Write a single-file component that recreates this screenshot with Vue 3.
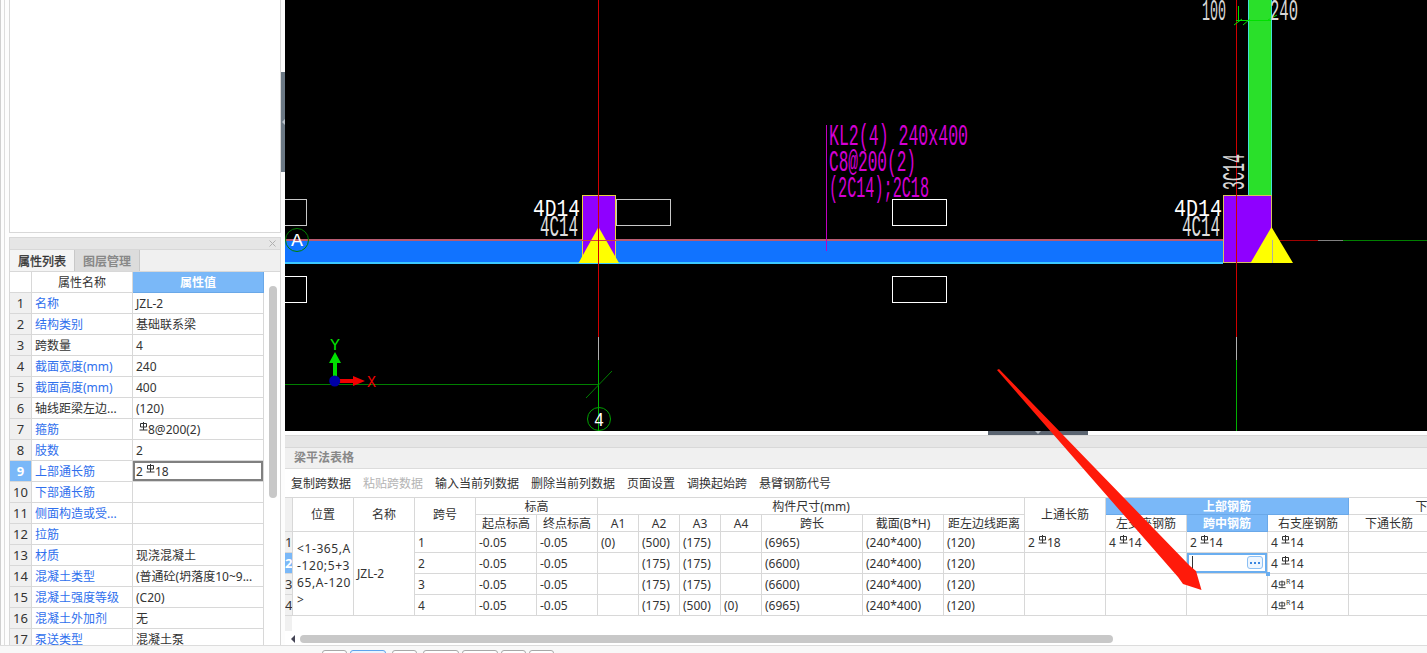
<template>
  <div class="app">
    <div class="main">
      <!-- left column -->
      <aside class="side">
        <div class="side-top"></div>
        <div class="side-handle"><i></i></div>
        <section class="prop">
          <div class="prop-head">
            <svg width="7" height="7" viewBox="0 0 7 7">
              <path d="M0.5 0.5L6.5 6.5M6.5 0.5L0.5 6.5" stroke="#b0b0b0" fill="none" />
            </svg>
          </div>
          <div class="tabs">
            <span class="tab on">属性列表</span>
            <span class="tab">图层管理</span>
          </div>
          <div class="prop-body">
            <table class="prop-table">
              <colgroup>
                <col style="width: 22px" />
                <col style="width: 101px" />
                <col style="width: 131px" />
              </colgroup>
              <thead>
                <tr>
                  <th></th>
                  <th>属性名称</th>
                  <th class="hl">属性值</th>
                </tr>
              </thead>
              <tbody>
                <tr v-for="(p, i) in props" :key="i">
                  <td class="no" :class="{ sel: i === 8 }">{{ i + 1 }}</td>
                  <td :class="{ link: p.link }">{{ p.name }}</td>
                  <td :class="{ editing: i === 8 }">
                    <template v-for="(s, j) in rebar(p.value)" :key="j">
                      <svg v-if="s.sym" class="sym" viewBox="0 0 9 9">
                        <path d="M1.5 1.5h6v3.5h-6zM4.5 0v8M0.5 8h8" fill="none" stroke="#333" />
                      </svg>
                      <span v-else>{{ s.text }}</span>
                    </template>
                  </td>
                </tr>
              </tbody>
            </table>
            <div class="prop-thumb"></div>
          </div>
        </section>
      </aside>

      <div class="right">
        <!-- CAD canvas, drawn in screen coordinates -->
        <svg class="cad" width="1142" height="431" viewBox="285 0 1142 431">
          <rect x="285" y="0" width="1142" height="431" fill="#000" />

          <g shape-rendering="crispEdges" fill="none" stroke="#fff">
            <rect x="616.5" y="199.5" width="54" height="26" stroke="#c8c8c8" />
            <rect x="892.5" y="199.5" width="54" height="26" />
            <rect x="892.5" y="276.5" width="54" height="26" />
            <rect x="280.5" y="199.5" width="26" height="26" stroke="#c8c8c8" />
            <rect x="280.5" y="276.5" width="26" height="26" />
          </g>

          <g shape-rendering="crispEdges">
            <rect x="1248" y="0" width="24" height="195" fill="#2ae02a" />
            <rect x="1248" y="0" width="1" height="195" fill="#40e0d8" />
            <rect x="1271" y="0" width="1" height="195" fill="#40e0d8" />
            <rect x="285" y="240" width="938" height="22" fill="#1173ff" />
            <rect x="285" y="239" width="938" height="2" fill="#b85a70" />
            <rect x="285" y="262" width="938" height="2" fill="#3cc8ff" />
            <rect x="1223" y="240" width="95" height="1" fill="#a00000" />
            <rect x="1318" y="240" width="25" height="1" fill="#808080" />
            <rect x="1343" y="240" width="84" height="1" fill="#007f00" />
            <rect x="582.5" y="195.5" width="33" height="67" fill="#8f00ff" stroke="#e8d040" />
            <rect x="1223.5" y="195.5" width="48" height="67" fill="#8f00ff" stroke="#d8c060" />
          </g>
          <polygon points="598.5,227 619,263 578.5,263" fill="#ff0" />
          <polygon points="1271.5,227 1293,263 1250.5,263" fill="#ff0" />

          <g shape-rendering="crispEdges">
            <rect x="582" y="240" width="34" height="1" fill="#d04040" />
            <rect x="1272" y="240" width="1" height="23" fill="#b0b0a0" />
            <rect x="598" y="0" width="1" height="337" fill="#d00000" />
            <rect x="598" y="337" width="1" height="23" fill="#b0b0b0" />
            <rect x="598" y="360" width="1" height="71" fill="#00b000" />
            <rect x="1236" y="0" width="1" height="337" fill="#d00000" />
            <rect x="1236" y="337" width="1" height="23" fill="#b0b0b0" />
            <rect x="1236" y="360" width="1" height="71" fill="#00b000" />
            <rect x="285" y="384" width="313" height="1" fill="#007f00" />
            <rect x="826" y="125" width="1" height="126" fill="#c000c0" />
          </g>
          <path d="M586 398L612 371" stroke="#007f00" fill="none" />

          <!-- axis markers -->
          <circle cx="297" cy="240" r="11.5" fill="none" stroke="#007f00" />
          <circle cx="599" cy="419" r="11.5" fill="none" stroke="#00a000" />
          <path
            d="M1238.5 6V22M1236 20.5H1271M1234 25L1242 19M1243 25L1250 19M1268 20L1277 15"
            stroke="#00e000"
            fill="none"
          />

          <text
            v-for="t in cadTexts"
            :key="t.text + t.x"
            class="cad-text"
            :x="t.x"
            :y="t.y"
            :font-size="t.size"
            :fill="t.color"
            :textLength="t.w"
            lengthAdjust="spacingAndGlyphs"
          >{{ t.text }}</text>
          <text
            class="cad-text"
            transform="translate(1244 190) rotate(-90)"
            font-size="31"
            fill="#d8d8d8"
            textLength="36"
            lengthAdjust="spacingAndGlyphs"
          >3C14</text>

          <!-- UCS icon -->
          <path d="M333 381V363H329L335 352L341 363H337V381Z" fill="#00e000" />
          <path d="M335 379H353V376L365 381L353 386V383H335Z" fill="#f00000" />
          <circle cx="334.7" cy="381" r="5.5" fill="#0000a8" />
        </svg>

        <div class="strip"><div class="strip-handle"><i></i></div></div>

        <section class="beam">
          <div class="band"></div>
          <div class="title">梁平法表格</div>
          <div class="toolbar">
            <span v-for="b in tools" :key="b" :class="{ off: b === '粘贴跨数据' }">{{ b }}</span>
          </div>

          <div class="grid-wrap">
            <table class="grid">
              <colgroup>
                <col v-for="(w, i) in colWidths" :key="i" :style="{ width: w + 'px' }" />
              </colgroup>
              <thead>
                <tr>
                  <th rowspan="2" class="no"></th>
                  <th rowspan="2">位置</th>
                  <th rowspan="2">名称</th>
                  <th rowspan="2">跨号</th>
                  <th colspan="2">标高</th>
                  <th colspan="7">构件尺寸(mm)</th>
                  <th rowspan="2">上通长筋</th>
                  <th colspan="3" class="hl">上部钢筋</th>
                  <th colspan="2">下部钢筋</th>
                </tr>
                <tr>
                  <th>起点标高</th>
                  <th>终点标高</th>
                  <th>A1</th>
                  <th>A2</th>
                  <th>A3</th>
                  <th>A4</th>
                  <th>跨长</th>
                  <th>截面(B*H)</th>
                  <th>距左边线距离</th>
                  <th>左支座钢筋</th>
                  <th class="hl">跨中钢筋</th>
                  <th>右支座钢筋</th>
                  <th>下通长筋</th>
                  <th></th>
                </tr>
              </thead>
              <tbody>
                <tr v-for="(r, i) in spans" :key="i">
                  <td class="no" :class="{ sel: i === 1 }">{{ i + 1 }}</td>
                  <td v-if="i === 0" rowspan="4" class="pos">
                    &lt;1-365,A<br />-120;5+3<br />65,A-120<br />&gt;
                  </td>
                  <td v-if="i === 0" rowspan="4">JZL-2</td>
                  <td>{{ i + 1 }}</td>
                  <td>-0.05</td>
                  <td>-0.05</td>
                  <td v-for="(c, k) in r.size" :key="k">{{ c }}</td>
                  <td v-for="(c, k) in r.bars" :key="'b' + k" :class="{ active: i === 1 && k === 2 }">
                    <template v-for="(s, j) in rebar(c)" :key="j">
                      <template v-if="s.sym">
                        <svg class="sym" :class="{ tight: s.r }" viewBox="0 0 9 9">
                          <path d="M1.5 1.5h6v3.5h-6zM4.5 0v8M0.5 8h8" fill="none" stroke="#333" />
                        </svg>
                        <sup v-if="s.r" class="r">R</sup>
                      </template>
                      <span v-else>{{ s.text }}</span>
                    </template>
                    <template v-if="i === 1 && k === 2">
                      <span class="caret"></span>
                      <span class="more"><b></b><b></b><b></b></span>
                      <span class="corner"></span>
                    </template>
                  </td>
                  <td></td>
                  <td></td>
                </tr>
              </tbody>
            </table>
            <div class="stub"></div>
          </div>

          <div class="hscroll">
            <i class="arrow"></i>
            <div class="hthumb"></div>
          </div>
        </section>
      </div>
    </div>

    <footer class="foot">
      <span
        v-for="(b, i) in footButtons"
        :key="i"
        class="foot-btn"
        :class="{ on: i === 1 }"
        :style="{ width: b.w + 'px', marginLeft: b.m + 'px' }"
      ></span>
    </footer>

    <!-- red annotation arrow laid over the screenshot -->
    <svg class="note" width="1427" height="653" viewBox="0 0 1427 653">
      <polygon
        points="997,370 999,369 1190,566 1196,571 1201.5,590 1183,584 1178,577"
        fill="#ff1a0a"
      />
    </svg>
  </div>
</template>

<script setup>
const props = [
  { name: "名称", value: "JZL-2", link: true },
  { name: "结构类别", value: "基础联系梁", link: true },
  { name: "跨数量", value: "4" },
  { name: "截面宽度(mm)", value: "240", link: true },
  { name: "截面高度(mm)", value: "400", link: true },
  { name: "轴线距梁左边...", value: "(120)" },
  { name: "箍筋", value: "#8@200(2)", link: true },
  { name: "肢数", value: "2", link: true },
  { name: "上部通长筋", value: "2#18", link: true },
  { name: "下部通长筋", value: "", link: true },
  { name: "侧面构造或受...", value: "", link: true },
  { name: "拉筋", value: "", link: true },
  { name: "材质", value: "现浇混凝土", link: true },
  { name: "混凝土类型", value: "(普通砼(坍落度10~9...", link: true },
  { name: "混凝土强度等级", value: "(C20)", link: true },
  { name: "混凝土外加剂", value: "无", link: true },
  { name: "泵送类型", value: "混凝土泵", link: true },
];

const tools = [
  "复制跨数据",
  "粘贴跨数据",
  "输入当前列数据",
  "删除当前列数据",
  "页面设置",
  "调换起始跨",
  "悬臂钢筋代号",
];

const colWidths = [8, 61, 61, 61, 61, 61, 41, 41, 41, 41, 101, 81, 81, 81, 81, 81, 81, 81, 101];

const spans = [
  {
    size: ["(0)", "(500)", "(175)", "", "(6965)", "(240*400)", "(120)"],
    bars: ["2#18", "4#14", "2#14", "4#14"],
  },
  {
    size: ["", "(175)", "(175)", "", "(6600)", "(240*400)", "(120)"],
    bars: ["", "", "", "4#14"],
  },
  {
    size: ["", "(175)", "(175)", "", "(6600)", "(240*400)", "(120)"],
    bars: ["", "", "", "4#R14"],
  },
  {
    size: ["", "(175)", "(500)", "(0)", "(6965)", "(240*400)", "(120)"],
    bars: ["", "", "", "4#R14"],
  },
];

const cadTexts = [
  { text: "KL2(4) 240x400", x: 829, y: 145, size: 30, w: 139, color: "#d400d4" },
  { text: "C8@200(2)", x: 829, y: 171, size: 30, w: 87, color: "#d400d4" },
  { text: "(2C14);2C18", x: 829, y: 197, size: 30, w: 100, color: "#d400d4" },
  { text: "4D14", x: 533, y: 216, size: 24, w: 47, color: "#ffffff" },
  { text: "4C14", x: 540, y: 236, size: 29, w: 38, color: "#e0e0e0" },
  { text: "4D14", x: 1174, y: 216, size: 24, w: 48, color: "#ffffff" },
  { text: "4C14", x: 1182, y: 236, size: 29, w: 38, color: "#e0e0e0" },
  { text: "100", x: 1202, y: 20, size: 30, w: 24, color: "#d8d8d8" },
  { text: "240", x: 1270, y: 20, size: 30, w: 28, color: "#d8d8d8" },
  { text: "A", x: 291, y: 246, size: 18, w: 12, color: "#ffffff" },
  { text: "4", x: 594, y: 426, size: 20, w: 10, color: "#ffffff" },
  { text: "Y", x: 330, y: 350, size: 17, w: 10, color: "#00e000" },
  { text: "X", x: 367, y: 387, size: 17, w: 9, color: "#f00000" },
];

const footButtons = [
  { w: 25, m: 322 },
  { w: 36, m: 3 },
  { w: 25, m: 6 },
  { w: 36, m: 6 },
  { w: 36, m: 3 },
  { w: 25, m: 3 },
  { w: 25, m: 3 },
];

// "#" marks the rebar grade symbol, "#R" the cold-rolled one
const rebar = (value) =>
  value
    .split(/(#R?)/)
    .filter(Boolean)
    .map((s) => (s[0] === "#" ? { sym: true, r: s === "#R" } : { text: s }));
</script>

<style>
html,
body {
  margin: 0;
  background: #fff;
  overflow: hidden;
}
</style>

<style scoped>
.app {
  position: relative;
  width: 1427px;
  height: 653px;
  overflow: hidden;
  background: #fdfdfd;
  font-family: "Noto Sans", "Noto Sans CJK SC", sans-serif;
  font-size: 12px;
  color: #333;
}

.main {
  display: flex;
  height: 645px;
}

.side {
  position: relative;
  display: flex;
  flex-direction: column;
  flex: none;
  box-sizing: border-box;
  width: 285px;
  padding: 0 4px 0 8px;
  border-left: 1px solid #d0d0d0;
  background: linear-gradient(#ddd, #ddd) 3px 0 / 1px 100% no-repeat #fdfdfd;
}

.side-top {
  flex: none;
  height: 232px;
  border: 1px solid #d8d8d8;
  border-top: 0;
  background: #fff;
}

.side-handle {
  position: absolute;
  top: 72px;
  right: 0;
  display: flex;
  align-items: center;
  justify-content: center;
  width: 4px;
  height: 100px;
  background: #6b7884;
}

.side-handle i {
  width: 0;
  height: 0;
  border-top: 3px solid transparent;
  border-bottom: 3px solid transparent;
  border-right: 3px solid #b8c0c8;
}

.prop {
  display: flex;
  flex-direction: column;
  flex: 1;
  min-height: 0;
  margin-top: 4px;
  overflow: hidden;
  border: 1px solid #d8d8d8;
  border-bottom: 0;
  background: #fff;
}

.prop-head {
  display: flex;
  flex: none;
  align-items: center;
  justify-content: flex-end;
  height: 11px;
  padding-right: 4px;
  background: #e6e6e6;
}

.tabs {
  display: flex;
  flex: none;
  box-sizing: border-box;
  height: 23px;
  border-top: 1px solid #d8d8d8;
  border-bottom: 1px solid #d8d8d8;
  background: #f0f0f0;
}

.tab {
  display: flex;
  align-items: center;
  justify-content: center;
  box-sizing: border-box;
  width: 65px;
  color: #888;
  background: #dcdcdc;
  border-right: 1px solid #c8c8c8;
  font-weight: 700;
}

.tab.on {
  color: #333;
  background: #f4f4f4;
  font-weight: 400;
  -webkit-text-stroke: 0.3px #333;
}

.prop-body {
  display: flex;
  align-items: flex-start;
  flex: 1;
  min-height: 0;
}

.prop-table {
  flex: none;
  width: 254px;
  table-layout: fixed;
  border-spacing: 0;
  font-size: 12px;
}

.prop-table th,
.prop-table td {
  box-sizing: border-box;
  height: 21px;
  padding: 0 3px;
  border-right: 1px solid #d8d8d8;
  border-bottom: 1px solid #d8d8d8;
  font-weight: 400;
  white-space: nowrap;
  overflow: hidden;
}

.prop-table th.hl {
  color: #fff;
  font-weight: 700;
  background: #7ab8f8;
  border-color: #6aa8e8;
}

.prop-table td.no {
  padding: 0;
  text-align: center;
  background: #f0f0f0;
  font-size: 13px;
}

.prop-table td.link {
  color: #2f6fed;
}

.prop-table td.sel,
.grid td.sel {
  color: #fff;
  font-weight: 700;
  background: #7ab8f8;
}

.prop-table td.editing {
  box-shadow: inset 0 0 0 2px #808080;
}

.prop-thumb {
  flex: none;
  width: 8px;
  height: 212px;
  margin: 14px 0 0 5px;
  border-radius: 4px;
  background: #c8c8c8;
}

.sym {
  display: inline-block;
  width: 9px;
  height: 9px;
  margin: 0 0 0 3px;
  vertical-align: 3px;
}

.sym.tight {
  width: 8px;
  margin-left: 0;
  vertical-align: 0;
}

.r {
  font-size: 7px;
  line-height: 0;
  vertical-align: 5px;
}

.right {
  display: flex;
  flex-direction: column;
  flex: 1;
  min-width: 0;
}

.cad {
  display: block;
  flex: none;
}

.cad-text {
  font-family: "Liberation Mono", monospace;
}

.strip {
  flex: none;
  height: 4px;
  padding-left: 703px;
  background: #fff;
}

.strip-handle {
  display: flex;
  justify-content: center;
  width: 100px;
  height: 4px;
  background: #5a6470;
}

.strip-handle i {
  width: 0;
  height: 0;
  border-left: 3px solid transparent;
  border-right: 3px solid transparent;
  border-top: 3px solid #b8c0c8;
}

.beam {
  display: flex;
  flex-direction: column;
  flex: 1;
  min-height: 0;
  background: #fff;
}

.band {
  flex: none;
  height: 11px;
  border-top: 1px solid #d8d8d8;
  background: #e6e6e6;
}

.title {
  flex: none;
  box-sizing: border-box;
  height: 22px;
  padding-left: 9px;
  line-height: 20px;
  border-top: 1px solid #d8d8d8;
  border-bottom: 1px solid #dcdcdc;
  background: #f0f0f0;
  color: #888;
  font-weight: 700;
}

.toolbar {
  display: flex;
  flex: none;
  align-items: center;
  gap: 12px;
  height: 28px;
  padding-left: 6px;
}

.toolbar .off {
  color: #b4b4b4;
}

.grid-wrap {
  flex: none;
  height: 133px;
  overflow: hidden;
  border-top: 1px solid #d8d8d8;
}

.grid {
  width: 1246px;
  table-layout: fixed;
  border-spacing: 0;
  font-size: 12px;
}

.grid th,
.grid td {
  box-sizing: border-box;
  padding: 0 3px;
  border-right: 1px solid #d8d8d8;
  border-bottom: 1px solid #d8d8d8;
  font-weight: 400;
  white-space: nowrap;
  overflow: hidden;
}

.grid th {
  height: 17px;
  padding: 0;
  line-height: 15px;
}

.grid td {
  height: 21px;
}

.grid .no {
  padding: 0;
  background: #f0f0f0;
  font-size: 13px;
}

.grid th.hl {
  color: #fff;
  font-weight: 700;
  background: #7ab8f8;
  border-color: #6aa8e8;
}

.grid td.pos {
  padding-left: 4px;
  line-height: 17px;
  letter-spacing: 0.6px;
}

.grid td.active {
  position: relative;
  overflow: visible;
  box-shadow: inset 0 0 0 2px #6aaef0;
}

.caret {
  position: absolute;
  top: 3px;
  left: 5px;
  width: 1px;
  height: 14px;
  background: #333;
}

.more {
  position: absolute;
  top: 3px;
  right: 4px;
  display: flex;
  align-items: center;
  justify-content: center;
  gap: 2px;
  box-sizing: border-box;
  width: 16px;
  height: 13px;
  border: 1px solid #8cc0f4;
  border-radius: 3px;
  background: #eef6ff;
}

.more b {
  width: 2px;
  height: 2px;
  background: #3a86e0;
}

.corner {
  position: absolute;
  right: -3px;
  bottom: -3px;
  z-index: 1;
  width: 4px;
  height: 4px;
  background: #6aaef0;
}

.stub {
  width: 7px;
  height: 15px;
  background: #f0f0f0;
}

.hscroll {
  display: flex;
  flex: none;
  align-items: center;
  height: 16px;
  padding-left: 6px;
}

.arrow {
  flex: none;
  width: 0;
  height: 0;
  margin-right: 5px;
  border-top: 4px solid transparent;
  border-bottom: 4px solid transparent;
  border-right: 4px solid #445;
}

.hthumb {
  width: 813px;
  height: 8px;
  border-radius: 4px;
  background: #c8c8c8;
}

.foot {
  display: flex;
  box-sizing: border-box;
  height: 8px;
  padding-top: 4px;
  overflow: hidden;
  border-top: 1px solid #dcdcdc;
  background: #f8f8f8;
}

.foot-btn {
  flex: none;
  box-sizing: border-box;
  height: 10px;
  border: 1px solid #a8a8a8;
  border-radius: 3px 3px 0 0;
  background: #fff;
}

.foot-btn.on {
  border-color: #5ea4ec;
  background: #eaf4ff;
}

.note {
  position: absolute;
  top: 0;
  left: 0;
  pointer-events: none;
}
</style>
